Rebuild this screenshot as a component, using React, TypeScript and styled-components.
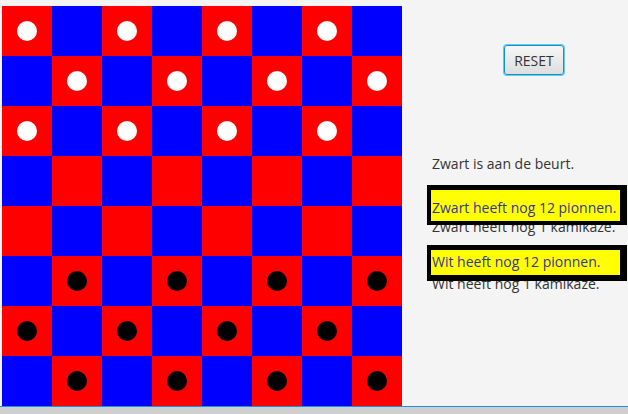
import React from "react";
import styled, {createGlobalStyle} from "styled-components";

const GlobalStyle = createGlobalStyle`
  html, body {
    margin: 0;
    padding: 0;
    background: #f4f4f4;
  }
  body {
    font-family: "Open Sans", "Liberation Sans", sans-serif;
  }
`;

const Window = styled.div`
  width: 628px;
  height: 414px;
  display: flex;
  flex-direction: column;
  background: #f4f4f4;
  overflow: hidden;
`;

const Main = styled.div`
  display: flex;
  padding: 6px 0 0 2px;
  height: 400px;
`;

const Board = styled.div`
  display: grid;
  grid-template-columns: repeat(8, 50px);
  grid-template-rows: repeat(8, 50px);
  flex: none;
`;

const Cell = styled.div<{ $dark: boolean }>`
  background: ${({$dark}) => ($dark ? "#0000ff" : "#ff0000")};
  display: flex;
  align-items: center;
  justify-content: center;
`;

const Piece = styled.div<{ $color: "white" | "black" }>`
  width: 20px;
  height: 20px;
  border-radius: 50%;
  background: ${({$color}) => ($color === "white" ? "#ffffff" : "#000000")};
`;

const Side = styled.div`
  flex: 1;
  display: flex;
  flex-direction: column;
  padding: 39px 1px 0 25px;
  color: #333333;
  font-size: 14px;
`;

const ResetButton = styled.button`
  align-self: flex-start;
  margin-left: 77px;
  width: 60px;
  height: 30px;
  padding: 0;
  border: 1px solid #0896d0;
  box-shadow: 0 0 0 1px #6cc6ec;
  border-radius: 3px;
  background: linear-gradient(#f6f6f6, #dedede);
  font-family: "Open Sans", "Liberation Sans", sans-serif;
  font-size: 14px;
  color: #333333;
`;

const Line = styled.div<{ $top: number }>`
  margin-top: ${({$top}) => $top}px;
  padding-left: 5px;
  line-height: 18px;
  height: 18px;
  white-space: nowrap;
`;

const CountBox = styled.div<{ $top: number; $padTop: number; $padBottom: number; $borderBottom: number }>`
  position: relative;
  z-index: 1;
  margin-top: ${({$top}) => $top}px;
  border-style: solid;
  border-color: #000000;
  border-width: 5px 7px ${({$borderBottom}) => $borderBottom}px 4px;
  background: #ffff00;
  padding: ${({$padTop}) => $padTop}px 0 ${({$padBottom}) => $padBottom}px 1px;
  line-height: 18px;
  color: #3434a0;
  white-space: nowrap;
`;

const BottomBar = styled.div`
  height: 8px;
  border-top: 1.5px solid #1e90e0;
  background: #cfcfcf;
`;

const cells = Array.from({length: 64}, (_, i) => {
  const r = Math.floor(i / 8);
  const c = i % 8;
  const dark = (r + c) % 2 === 1;
  let piece: "white" | "black" | null = null;
  if (!dark && r < 3) piece = "white";
  if (!dark && r > 4) piece = "black";
  return {dark, piece};
});

export default function App() {
  return (
    <>
      <GlobalStyle/>
      <Window>
        <Main>
          <Board>
            {cells.map((cell, i) => (
              <Cell key={i} $dark={cell.dark}>
                {cell.piece && <Piece $color={cell.piece}/>}
              </Cell>
            ))}
          </Board>
          <Side>
            <ResetButton>RESET</ResetButton>
            <Line $top={80}>Zwart is aan de beurt.</Line>
            <CountBox $top={12} $padTop={9} $padBottom={4} $borderBottom={4}>
              Zwart heeft nog 12 pionnen.
            </CountBox>
            <Line $top={-7}>Zwart heeft nog 1 kamikaze.</Line>
            <CountBox $top={9} $padTop={3} $padBottom={4} $borderBottom={6}>
              Wit heeft nog 12 pionnen.
            </CountBox>
            <Line $top={-6}>Wit heeft nog 1 kamikaze.</Line>
          </Side>
        </Main>
        <BottomBar/>
      </Window>
    </>
  );
}
